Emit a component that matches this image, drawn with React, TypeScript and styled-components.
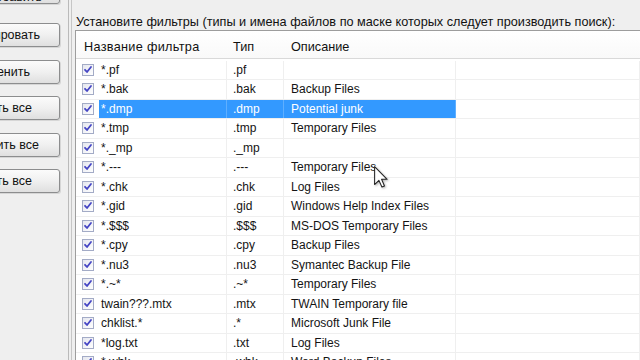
import styled, { createGlobalStyle } from "styled-components";

const GlobalStyle = createGlobalStyle`
  html, body {
    margin: 0;
    padding: 0;
    background: #efefef;
    overflow: hidden;
  }

  body {
    font-family: "Liberation Sans", Arial, sans-serif;
    font-size: 12px;
    color: #141414;
  }
`;

const Window = styled.div`
  position: relative;
  width: 640px;
  height: 360px;
  display: flex;
  overflow: hidden;
  background: #efefef;
`;

const ButtonColumn = styled.div`
  width: 68px;
  flex-shrink: 0;
  overflow: hidden;

  display: flex;
  flex-direction: column;
  gap: 12.5px;
`;

const Button = styled.div<{ $pad: number }>`
  width: 120px;
  height: 24px;
  margin-left: -60px;
  box-sizing: border-box;
  flex-shrink: 0;

  padding-right: ${(p) => p.$pad}px;
  font-size: 12.5px;
  line-height: 22px;
  text-align: right;
  white-space: nowrap;
  color: #111;

  border: 1px solid #8c8d8e;
  border-radius: 3px;
  background: linear-gradient(#fbfbfb, #f0f0f0 50%, #dfdfdf);
  box-shadow: 1px 1px 0 #d6d6d6;

  &:first-child {
    margin-top: -20px;
    margin-bottom: 6.5px;
    line-height: 32px;
  }
`;

const Pane = styled.div`
  flex: 1;
  display: flex;
  border-left: 1px solid #bababa;
  padding-left: 2px;
`;

const Content = styled.div`
  flex: 1;
  display: flex;
  flex-direction: column;
  border-left: 1px solid #c6c6c6;
  padding-left: 3px;
`;

const Caption = styled.div`
  padding: 15px 0 0 1px;
  height: 15px;
  font-size: 12.7px;
  line-height: 14px;
  white-space: nowrap;
  color: #111;
`;

const ListBox = styled.div`
  flex: 1;
  background: #fff;
  border-top: 1px solid #9d9d9d;
  border-left: 1px solid #9d9d9d;
  overflow: hidden;
`;

const Header = styled.div`
  display: grid;
  grid-template-columns: 151px 57px 172px 1fr;
  height: 27px;
  border-bottom: 1px solid #d9d9d9;
  background: linear-gradient(#ffffff, #f9f9f9);
`;

const HeaderCell = styled.div<{ $pad: number; $spacing?: number }>`
  padding: 9px 0 0 ${(p) => p.$pad}px;
  font-size: 12.7px;
  letter-spacing: ${(p) => p.$spacing ?? 0}px;
  line-height: 14px;
  white-space: nowrap;
  color: #111;
`;

const Body = styled.div`
  padding-top: 1.5px;
`;

const Row = styled.div`
  display: grid;
  grid-template-columns: 23px 128px 57px 172px 1fr;
  height: 19.5px;
  box-sizing: border-box;
  border-bottom: 1px solid #efefef;
`;

const CheckCell = styled.div`
  display: flex;
  align-items: center;
  padding-left: 6px;
`;

const Cell = styled.div<{ $pad: number; $selected?: boolean }>`
  padding-left: ${(p) => p.$pad}px;
  line-height: 19px;
  white-space: nowrap;
  overflow: hidden;
  color: ${(p) => (p.$selected ? "#fff" : "#141414")};
  background: ${(p) => (p.$selected ? "#3399ff" : "transparent")};
  border-right: 1px solid
    ${(p) => (p.$selected ? "rgba(255, 255, 255, 0.22)" : "#efefef")};
`;

const Cursor = styled.svg`
  position: absolute;
  left: 374px;
  top: 166px;
  filter: drop-shadow(1px 1px 1px rgba(0, 0, 0, 0.3));
`;

const CheckBox = () => (
  <svg width="12" height="12" viewBox="0 0 12 12">
    <defs>
      <linearGradient id="cb" x1="0" y1="0" x2="1" y2="1">
        <stop offset="0" stopColor="#e4e6ee" />
        <stop offset="1" stopColor="#ffffff" />
      </linearGradient>
    </defs>
    <rect x="0.5" y="0.5" width="11" height="11" fill="url(#cb)" stroke="#a3abc6" />
    <path
      d="M3 5.8 L5 8 L9 3"
      fill="none"
      stroke="#4545c4"
      strokeWidth="1.8"
      strokeLinecap="round"
      strokeLinejoin="round"
    />
  </svg>
);

const buttons = [
  { text: "Добавить", pad: 17 },
  { text: "Копировать", pad: 19 },
  { text: "Изменить", pad: 29 },
  { text: "Включить все", pad: 27 },
  { text: "Отключить все", pad: 20 },
  { text: "Удалить все", pad: 27 },
];

const filters: [string, string, string][] = [
  ["*.pf", ".pf", ""],
  ["*.bak", ".bak", "Backup Files"],
  ["*.dmp", ".dmp", "Potential junk"],
  ["*.tmp", ".tmp", "Temporary Files"],
  ["*._mp", "._mp", ""],
  ["*.---", ".---", "Temporary Files"],
  ["*.chk", ".chk", "Log Files"],
  ["*.gid", ".gid", "Windows Help Index Files"],
  ["*.$$$", ".$$$", "MS-DOS Temporary Files"],
  ["*.cpy", ".cpy", "Backup Files"],
  ["*.nu3", ".nu3", "Symantec Backup File"],
  ["*.~*", ".~*", "Temporary Files"],
  ["twain???.mtx", ".mtx", "TWAIN Temporary file"],
  ["chklist.*", ".*", "Microsoft Junk File"],
  ["*log.txt", ".txt", "Log Files"],
  ["*.wbk", ".wbk", "Word Backup Files"],
];

const SELECTED = 2;

const App = () => {
  return (
    <Window>
      <GlobalStyle />
      <ButtonColumn>
        {buttons.map((b) => (
          <Button key={b.text} $pad={b.pad}>
            {b.text}
          </Button>
        ))}
      </ButtonColumn>
      <Pane>
        <Content>
          <Caption>
            Установите фильтры (типы и имена файлов по маске которых следует
            производить поиск):
          </Caption>
          <ListBox>
            <Header>
              <HeaderCell $pad={8} $spacing={0.3}>
                Название фильтра
              </HeaderCell>
              <HeaderCell $pad={6}>Тип</HeaderCell>
              <HeaderCell $pad={7}>Описание</HeaderCell>
              <HeaderCell $pad={0} />
            </Header>
            <Body>
              {filters.map(([mask, type, desc], i) => {
                const sel = i === SELECTED;
                return (
                  <Row key={mask}>
                    <CheckCell>
                      <CheckBox />
                    </CheckCell>
                    <Cell $pad={2} $selected={sel}>
                      {mask}
                    </Cell>
                    <Cell $pad={6} $selected={sel}>
                      {type}
                    </Cell>
                    <Cell $pad={7} $selected={sel}>
                      {desc}
                    </Cell>
                    <Cell $pad={0} />
                  </Row>
                );
              })}
            </Body>
          </ListBox>
        </Content>
      </Pane>
      <Cursor width="14" height="22" viewBox="0 0 12 19">
        <path
          d="M0.5 0.5 L0.5 16 L4.2 12.4 L6.8 18.2 L9 17.2 L6.5 11.5 L11.3 11.5 Z"
          fill="#fff"
          stroke="#222"
          strokeWidth="0.9"
          strokeLinejoin="round"
        />
      </Cursor>
    </Window>
  );
};

export default App;
